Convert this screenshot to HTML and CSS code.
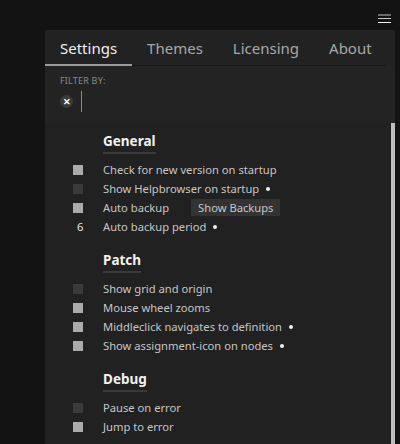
FILE: index.html
```html
<!DOCTYPE html>
<html>
<head>
<meta charset="utf-8">
<link rel="stylesheet" href="styles.css">
</head>
<body>
<div class="topbar">
  <div class="menu"><span class="l1"></span><span class="l2"></span><span class="l3"></span></div>
</div>
<div class="panel">
  <div class="tabs">
    <div class="tab active">Settings</div>
    <div class="tab">Themes</div>
    <div class="tab">Licensing</div>
    <div class="tab">About</div>
  </div>
  <div class="filter">
    <div class="filter-label">FILTER BY:</div>
    <div class="filter-row">
      <span class="clear">&#x2715;</span>
      <span class="caret"></span>
    </div>
  </div>
  <div class="content">
    <div class="scroll"></div>
    <div class="section">
      <div class="heading"><span>General</span></div>
      <div class="row"><span class="box on"></span><span class="label">Check for new version on startup</span></div>
      <div class="row"><span class="box"></span><span class="label">Show Helpbrowser on startup</span><span class="dot"></span></div>
      <div class="row"><span class="box on"></span><span class="label">Auto backup</span><span class="btn">Show Backups</span></div>
      <div class="row"><span class="num">6</span><span class="label">Auto backup period</span><span class="dot"></span></div>
    </div>
    <div class="section">
      <div class="heading"><span>Patch</span></div>
      <div class="row"><span class="box"></span><span class="label">Show grid and origin</span></div>
      <div class="row"><span class="box on"></span><span class="label">Mouse wheel zooms</span></div>
      <div class="row"><span class="box on"></span><span class="label">Middleclick navigates to definition</span><span class="dot"></span></div>
      <div class="row"><span class="box on"></span><span class="label">Show assignment-icon on nodes</span><span class="dot"></span></div>
    </div>
    <div class="section">
      <div class="heading"><span>Debug</span></div>
      <div class="row"><span class="box"></span><span class="label">Pause on error</span></div>
      <div class="row"><span class="box on"></span><span class="label">Jump to error</span></div>
    </div>
  </div>
</div>
</body>
</html>
```
FILE: styles.css
```css
* { box-sizing: border-box; }
html, body { margin: 0; height: 100%; }
body {
  background: #131313;
  font-family: "Noto Sans", "Open Sans", sans-serif;
  color: #c8c8c8;
  overflow: hidden;
  display: flex;
  flex-direction: column;
}
.topbar {
  height: 30px;
  flex-shrink: 0;
  display: flex;
  justify-content: flex-end;
  padding: 14px 9px 0 0;
}
.menu {
  width: 13px;
  display: flex;
  flex-direction: column;
}
.menu span { display: block; height: 1px; }
.menu .l1 { height: 2px; background: #6a6a6a; }
.menu .l2 { margin-top: 2px; background: #c8c8c8; }
.menu .l3 { margin-top: 3px; background: #f2f2f2; }
.panel {
  margin-left: 45px;
  width: 350px;
  flex: 1;
  min-height: 0;
  background: #222222;
  display: flex;
  flex-direction: column;
}
.tabs {
  display: flex;
  flex-shrink: 0;
  height: 36px;
  margin-right: 9px;
  border-bottom: 1px solid #171717;
}
.tab {
  padding: 1px 15px 0;
  font-size: 15px;
  line-height: 35px;
  color: #a8a8a8;
}
.tab.active {
  color: #f0f0f0;
  border-bottom: 2px solid #9a9a9a;
  margin-bottom: -1px;
  line-height: 34px;
}
.filter {
  flex-shrink: 0;
  height: 57px;
  padding: 10px 0 0 15px;
  background: #232323;
}
.filter-label {
  font-size: 9px;
  line-height: 10px;
  color: #8a8a8a;
  letter-spacing: 0.2px;
}
.filter-row {
  display: flex;
  align-items: center;
  margin-top: 5px;
  height: 21px;
}
.clear {
  width: 13px;
  height: 13px;
  border-radius: 50%;
  background: #3a3a3a;
  color: #ffffff;
  font-size: 9px;
  line-height: 13px;
  text-align: center;
  font-weight: bold;
}
.caret {
  width: 1px;
  height: 21px;
  background: #8a8a8a;
  margin-left: 8px;
}
.content {
  flex: 1;
  position: relative;
  background: #212121;
  padding: 9px 0 0 28px;
}
.scroll {
  position: absolute;
  right: 0;
  top: 0;
  bottom: 0;
  width: 4px;
  background: #bdbdbd;
}
.section { margin-bottom: 15px; }
.heading {
  display: flex;
  margin-left: 30px;
  margin-bottom: 6px;
}
.heading span {
  font-size: 13.5px;
  font-weight: bold;
  color: #f2f2f2;
  line-height: 18px;
  padding-bottom: 2px;
  border-bottom: 2px solid #3a3a3a;
}
.row {
  display: flex;
  align-items: center;
  height: 19px;
  font-size: 11.2px;
}
.box {
  width: 10px;
  height: 10px;
  background: #3a3a3a;
  margin-right: 20px;
}
.box.on { background: #ababab; }
.num {
  width: 30px;
  padding-left: 4px;
  color: #e8e8e8;
}
.label { color: #c6c6c6; }
.dot {
  width: 4px;
  height: 4px;
  border-radius: 50%;
  background: #f0f0f0;
  margin-left: 7px;
}
.btn {
  margin-left: 22px;
  background: #333333;
  height: 17px;
  line-height: 17px;
  padding: 0 7px;
  color: #c6c6c6;
}
```
